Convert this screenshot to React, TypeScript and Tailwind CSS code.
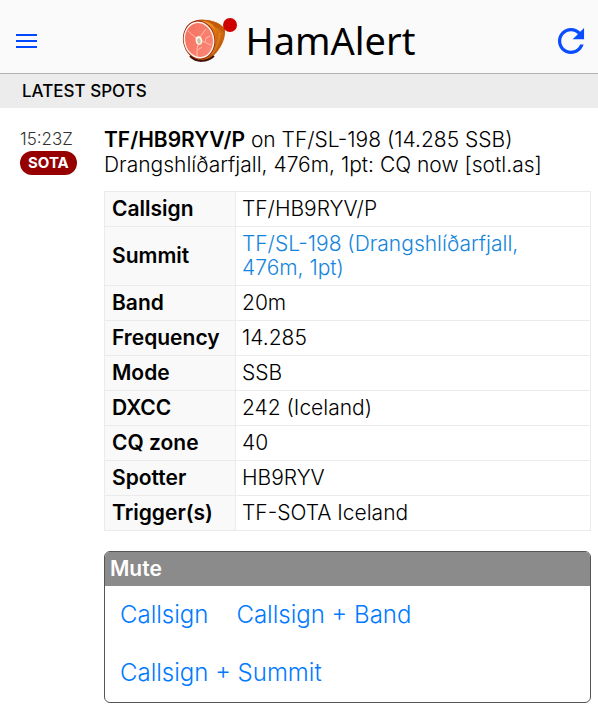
import React from "react";
import { IoMdRefresh } from "react-icons/io";

const details = [
  { label: "Callsign", value: "TF/HB9RYV/P" },
  { label: "Summit", value: "TF/SL-198 (Drangshlíðarfjall, 476m, 1pt)", link: true },
  { label: "Band", value: "20m" },
  { label: "Frequency", value: "14.285" },
  { label: "Mode", value: "SSB" },
  { label: "DXCC", value: "242 (Iceland)" },
  { label: "CQ zone", value: "40" },
  { label: "Spotter", value: "HB9RYV" },
  { label: "Trigger(s)", value: "TF-SOTA Iceland" }
];

const muteOptions = ["Callsign", "Callsign + Band", "Callsign + Summit"];

function HamLogo() {
  return (
    <svg width="56" height="46" viewBox="0 0 56 46" aria-hidden="true">
      <defs>
        <linearGradient id="skin" x1="0" y1="0" x2="1" y2="1">
          <stop offset="0" stopColor="#a83a08" />
          <stop offset="0.5" stopColor="#dd7412" />
          <stop offset="1" stopColor="#a94a06" />
        </linearGradient>
        <linearGradient id="meat" x1="0" y1="0" x2="1" y2="1">
          <stop offset="0" stopColor="#f4705e" />
          <stop offset="1" stopColor="#fb8878" />
        </linearGradient>
      </defs>
      <path
        d="M3 13C7 4 16 1 25 3c8 1 15 4 18 9 1 8-3 17-8 23-5 6-10 9-15 9-6 0-11-3-14-8z"
        fill="url(#skin)"
      />
      <path d="M25 3c7 1 14 4 18 9l-1 4c-4-4-10-7-16-9z" fill="#c25a0a" />
      <path d="M16 4c6-1 11 0 15 4l3 6c-4-5-10-8-18-9z" fill="#ec8c2a" />
      <path d="M38 16c-1 9-3 15-8 21" fill="none" stroke="#f08a28" strokeWidth="2" opacity="0.5" />
      <path d="M8 39c7 7 17 6 24 0" fill="none" stroke="#401204" strokeWidth="2" />
      <ellipse cx="17" cy="23" rx="16" ry="19.5" transform="rotate(-10 17 23)" fill="#8f1c0c" />
      <ellipse cx="17" cy="23" rx="15.3" ry="18.6" transform="rotate(-10 17 23)" fill="#fff0e2" />
      <ellipse cx="17" cy="23" rx="13.8" ry="17" transform="rotate(-10 17 23)" fill="url(#meat)" />
      <path
        d="M14 21L6 14M18 20l6-8M20 24l9 4M16 28l-1 5v6M16 33l4-3M23 25l1-4 4-2"
        fill="none"
        stroke="#ffbcab"
        strokeWidth="1"
      />
      <ellipse cx="17" cy="23.5" rx="3.2" ry="4.4" transform="rotate(-12 17 24)" fill="#fff6e8" />
      <ellipse cx="17" cy="24" rx="1.7" ry="2.8" transform="rotate(-12 17 24)" fill="#c5c2a6" />
      <circle cx="48" cy="8" r="7" fill="#cf0000" />
    </svg>
  );
}

function Header() {
  return (
    <header className="flex h-[74px] items-center justify-between border-b border-[#b2b2b2] bg-[#fafafa] pt-2 pr-2 pl-4">
      <button type="button" aria-label="Menu" className="flex w-[21px] flex-col gap-1">
        <span className="h-0.5 w-full bg-[#0048ff]" />
        <span className="h-0.5 w-full bg-[#0048ff]" />
        <span className="h-0.5 w-full bg-[#0048ff]" />
      </button>
      <div className="flex items-center gap-2 pb-0.5 pl-2">
        <HamLogo />
        <h1 className="font-['Noto_Sans',sans-serif] text-[38px] leading-[44px] text-black">HamAlert</h1>
      </div>
      <button type="button" aria-label="Refresh" className="text-[#0a4cff]">
        <IoMdRefresh size={38} />
      </button>
    </header>
  );
}

function DetailTable() {
  return (
    <table className="mt-[14px] w-full border-collapse text-[21px] leading-6">
      <tbody>
        {details.map(row => (
          <tr key={row.label}>
            <th
              scope="row"
              className="w-[131px] border border-[#ebebeb] bg-[#f9f9f9] px-[7px] py-[5px] text-left font-semibold"
            >
              {row.label}
            </th>
            <td className="border border-[#ebebeb] py-[5px] pr-4 pl-1.5 font-light">
              {row.link ? (
                <a href="#summit" className="text-[#1485dc]">
                  {row.value}
                </a>
              ) : (
                row.value
              )}
            </td>
          </tr>
        ))}
      </tbody>
    </table>
  );
}

function MuteBox() {
  return (
    <section className="mt-5 overflow-hidden rounded-md border border-[#555]">
      <h2 className="bg-[#8b8b8b] px-[5px] py-1 text-[21px] leading-[26px] font-semibold text-white">Mute</h2>
      <div className="flex flex-wrap gap-x-7 px-[15px]">
        {muteOptions.map(option => (
          <button key={option} type="button" className="h-[58px] text-2xl font-light text-[#007aff]">
            {option}
          </button>
        ))}
      </div>
    </section>
  );
}

export default function App() {
  return (
    <div className="min-h-screen bg-white font-['Inter',sans-serif] text-black">
      <Header />
      <h2 className="bg-[#ececec] px-[22px] py-1 text-[17px] leading-[26px] font-medium">LATEST SPOTS</h2>
      <main className="flex pt-[19px] pr-[7px] pb-4 pl-5">
        <div className="flex w-[84px] shrink-0 flex-col items-start">
          <time className="text-[17px] leading-6 font-light text-[#333]">15:23Z</time>
          <span className="rounded-full bg-[#960000] px-2 text-[15px] leading-6 font-bold text-white">SOTA</span>
        </div>
        <div className="min-w-0 flex-1">
          <p className="text-[21px] leading-[25px] font-light">
            <strong className="font-semibold">TF/HB9RYV/P</strong> on TF/SL-198 (14.285 SSB)
          </p>
          <p className="text-[21px] leading-[25px] font-light">Drangshlíðarfjall, 476m, 1pt: CQ now [sotl.as]</p>
          <DetailTable />
          <MuteBox />
        </div>
      </main>
    </div>
  );
}
